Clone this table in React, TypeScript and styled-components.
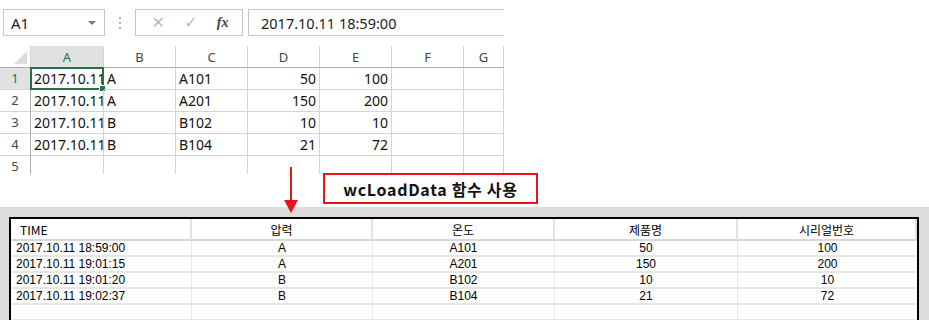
import React from "react";
import styled, { createGlobalStyle } from "styled-components";

const Global = createGlobalStyle`
  html, body { margin: 0; padding: 0; background: #fff; }
  body { width: 929px; height: 320px; overflow: hidden; }
`;

const Page = styled.div`
  position: relative;
  width: 929px;
  height: 320px;
  overflow: hidden;
  background: #fff;
  display: flex;
  flex-direction: column;
`;

const Excel = styled.div`
  width: 504px;
  height: 207px;
  flex-shrink: 0;
  display: flex;
  flex-direction: column;
  font-family: "Noto Sans", "Noto Sans CJK KR", sans-serif;
`;

const FormulaBar = styled.div`
  height: 46px;
  flex-shrink: 0;
  display: flex;
  align-items: flex-start;
  padding-top: 9px;
  box-sizing: border-box;
`;

const NameBox = styled.div`
  margin-left: 3px;
  width: 102px;
  height: 27px;
  box-sizing: border-box;
  border: 1px solid #c6c6c6;
  display: flex;
  align-items: center;
  justify-content: space-between;
  padding: 0 6px 0 7px;
  font-size: 15px;
  color: #222;
`;

const DropArrow = styled.span`
  width: 0;
  height: 0;
  border-left: 4px solid transparent;
  border-right: 4px solid transparent;
  border-top: 4px solid #777;
  margin-right: 2px;
`;

const Dots = styled.div`
  width: 30px;
  height: 27px;
  display: flex;
  flex-direction: column;
  align-items: center;
  justify-content: center;
  gap: 3px;
  & > i {
    width: 2px;
    height: 2px;
    background: #b0b0b0;
    display: block;
  }
`;

const FuncBox = styled.div`
  width: 108px;
  height: 27px;
  box-sizing: border-box;
  border: 1px solid #c6c6c6;
  display: flex;
  align-items: center;
  justify-content: space-around;
  padding: 0 4px 0 6px;
`;

const FuncIcon = styled.span<{ $fx?: boolean }>`
  font-family: ${(p) => (p.$fx ? '"Liberation Serif", serif' : '"DejaVu Sans", sans-serif')};
  font-style: ${(p) => (p.$fx ? "italic" : "normal")};
  font-size: ${(p) => (p.$fx ? "14px" : "16px")};
  color: ${(p) => (p.$fx ? "#444" : "#b8b8b8")};
  font-weight: ${(p) => (p.$fx ? "bold" : "normal")};
`;

const FormulaInput = styled.div`
  margin-left: 5px;
  flex: 1;
  height: 27px;
  box-sizing: border-box;
  border: 1px solid #c6c6c6;
  border-right: none;
  display: flex;
  align-items: center;
  padding-left: 12px;
  font-size: 14.5px;
  color: #222;
`;

const SheetWrap = styled.div`
  height: 128px;
  flex-shrink: 0;
  overflow: hidden;
`;

const Sheet = styled.div`
  display: grid;
  grid-template-columns: 31px 73px repeat(5, 72px) 40px;
  grid-auto-rows: 22px;
`;

const Cell = styled.div<{ $align?: "left" | "right" | "center" }>`
  box-sizing: border-box;
  border-right: 1px solid #d4d4d4;
  border-bottom: 1px solid #d4d4d4;
  font-size: 14px;
  color: #111;
  display: flex;
  align-items: center;
  justify-content: ${(p) =>
    p.$align === "right" ? "flex-end" : p.$align === "center" ? "center" : "flex-start"};
  padding: 0 3px 0 3px;
  white-space: nowrap;
  overflow: visible;
  position: relative;
`;

const ColHead = styled.div<{ $sel?: boolean }>`
  box-sizing: border-box;
  border-right: 1px solid #d4d4d4;
  border-bottom: 1px solid ${(p) => (p.$sel ? "#9a9a9a" : "#ababab")};
  background: ${(p) => (p.$sel ? "#e1e1e1" : "#fff")};
  color: ${(p) => (p.$sel ? "#217346" : "#444")};
  font-size: 13px;
  display: flex;
  align-items: center;
  justify-content: center;
`;

const Corner = styled.div`
  box-sizing: border-box;
  border-right: 1px solid #d4d4d4;
  border-bottom: 1px solid #ababab;
  position: relative;
  &::after {
    content: "";
    position: absolute;
    right: 3px;
    bottom: 3px;
    width: 0;
    height: 0;
    border-left: 13px solid transparent;
    border-bottom: 13px solid #dcdcdc;
  }
`;

const RowHead = styled.div<{ $sel?: boolean }>`
  box-sizing: border-box;
  border-right: 1px solid #ababab;
  border-bottom: 1px solid #d4d4d4;
  background: ${(p) => (p.$sel ? "#e1e1e1" : "#fff")};
  color: ${(p) => (p.$sel ? "#217346" : "#444")};
  font-size: 13px;
  line-height: 1;
  display: flex;
  align-items: center;
  justify-content: center;
`;

const Selection = styled.span`
  position: absolute;
  left: -1px;
  top: -1px;
  right: -1px;
  bottom: -1px;
  border: 2px solid #217346;
  pointer-events: none;
  &::after {
    content: "";
    position: absolute;
    right: -4px;
    bottom: -4px;
    width: 5px;
    height: 5px;
    background: #217346;
    border: 1px solid #fff;
  }
`;

const Arrow = styled.div`
  position: absolute;
  left: 284px;
  top: 167px;
  width: 14px;
  display: flex;
  flex-direction: column;
  align-items: center;
  &::before {
    content: "";
    width: 2px;
    height: 33px;
    background: #e8141c;
  }
  &::after {
    content: "";
    width: 0;
    height: 0;
    border-left: 7px solid transparent;
    border-right: 7px solid transparent;
    border-top: 13px solid #e8141c;
  }
`;

const Label = styled.div`
  position: absolute;
  left: 323px;
  top: 173px;
  width: 215px;
  height: 31px;
  box-sizing: border-box;
  border: 2px solid #e8141c;
  background: #fff;
  display: flex;
  align-items: center;
  justify-content: center;
  font-family: "Noto Sans CJK KR", sans-serif;
  font-weight: bold;
  font-size: 16px;
  letter-spacing: 0.7px;
  color: #111;
`;

const Panel = styled.div`
  flex: 1;
  min-height: 0;
  overflow: hidden;
  background: #dcdcdc;
  padding: 10px 10px 0 9px;
  box-sizing: border-box;
`;

const Table = styled.div`
  background: #fff;
  border: 2px solid #000;
  border-bottom: none;
  height: 120px;
  box-sizing: border-box;
  font-family: "Liberation Sans", "Noto Sans CJK KR", sans-serif;
  font-size: 12px;
  color: #000;
  display: grid;
  grid-template-columns: 181px 181px 182px 183px 1fr;
  grid-template-rows: 22px repeat(5, 16px);
`;

const TH = styled.div<{ $left?: boolean }>`
  box-sizing: border-box;
  border-right: 2px solid #e2e2e2;
  border-bottom: 2px solid #d8d8d8;
  display: flex;
  align-items: center;
  justify-content: ${(p) => (p.$left ? "flex-start" : "center")};
  padding-left: ${(p) => (p.$left ? "9px" : "0")};
  font-family: "Noto Sans CJK KR", sans-serif;
  font-size: 12px;
  &:last-child { border-right: none; }
`;

const TD = styled.div<{ $left?: boolean; $last?: boolean }>`
  box-sizing: border-box;
  border-right: ${(p) => (p.$last ? "none" : "1px solid #e6e6e6")};
  border-bottom: 2px solid #e6e6e6;
  display: flex;
  align-items: center;
  justify-content: ${(p) => (p.$left ? "flex-start" : "center")};
  padding-left: ${(p) => (p.$left ? "5px" : "0")};
  white-space: nowrap;
`;

const cols = ["A", "B", "C", "D", "E", "F", "G"];
const data: [string, string, string, number, number][] = [
  ["2017.10.11", "A", "A101", 50, 100],
  ["2017.10.11", "A", "A201", 150, 200],
  ["2017.10.11", "B", "B102", 10, 10],
  ["2017.10.11", "B", "B104", 21, 72],
];
const times = ["2017.10.11 18:59:00", "2017.10.11 19:01:15", "2017.10.11 19:01:20", "2017.10.11 19:02:37"];
const heads = ["TIME", "압력", "온도", "제품명", "시리얼번호"];

export default function App() {
  return (
    <Page>
      <Global />
      <Excel>
        <FormulaBar>
          <NameBox>
            A1
            <DropArrow />
          </NameBox>
          <Dots>
            <i />
            <i />
            <i />
          </Dots>
          <FuncBox>
            <FuncIcon>✕</FuncIcon>
            <FuncIcon>✓</FuncIcon>
            <FuncIcon $fx>fx</FuncIcon>
          </FuncBox>
          <FormulaInput>2017.10.11 18:59:00</FormulaInput>
        </FormulaBar>
        <SheetWrap>
          <Sheet>
            <Corner />
            {cols.map((c) => (
              <ColHead key={c} $sel={c === "A"}>
                {c}
              </ColHead>
            ))}
            {data.map((r, i) => (
              <React.Fragment key={i}>
                <RowHead $sel={i === 0}>{i + 1}</RowHead>
                <Cell>
                  {r[0]}
                  {i === 0 && <Selection />}
                </Cell>
                <Cell>{r[1]}</Cell>
                <Cell>{r[2]}</Cell>
                <Cell $align="right">{r[3]}</Cell>
                <Cell $align="right">{r[4]}</Cell>
                <Cell />
                <Cell />
              </React.Fragment>
            ))}
            <RowHead>5</RowHead>
            {cols.map((c) => (
              <Cell key={c} />
            ))}
          </Sheet>
        </SheetWrap>
      </Excel>
      <Panel>
        <Table>
          {heads.map((h, i) => (
            <TH key={h} $left={i === 0}>
              {h}
            </TH>
          ))}
          {data.map((r, i) => (
            <React.Fragment key={i}>
              <TD $left>{times[i]}</TD>
              <TD>{r[1]}</TD>
              <TD>{r[2]}</TD>
              <TD>{r[3]}</TD>
              <TD $last>{r[4]}</TD>
            </React.Fragment>
          ))}
          {[0, 1, 2, 3, 4].map((k) => (
            <TD key={k} $last={k === 4} />
          ))}
        </Table>
      </Panel>
      <Arrow />
      <Label>wcLoadData 함수 사용</Label>
    </Page>
  );
}
